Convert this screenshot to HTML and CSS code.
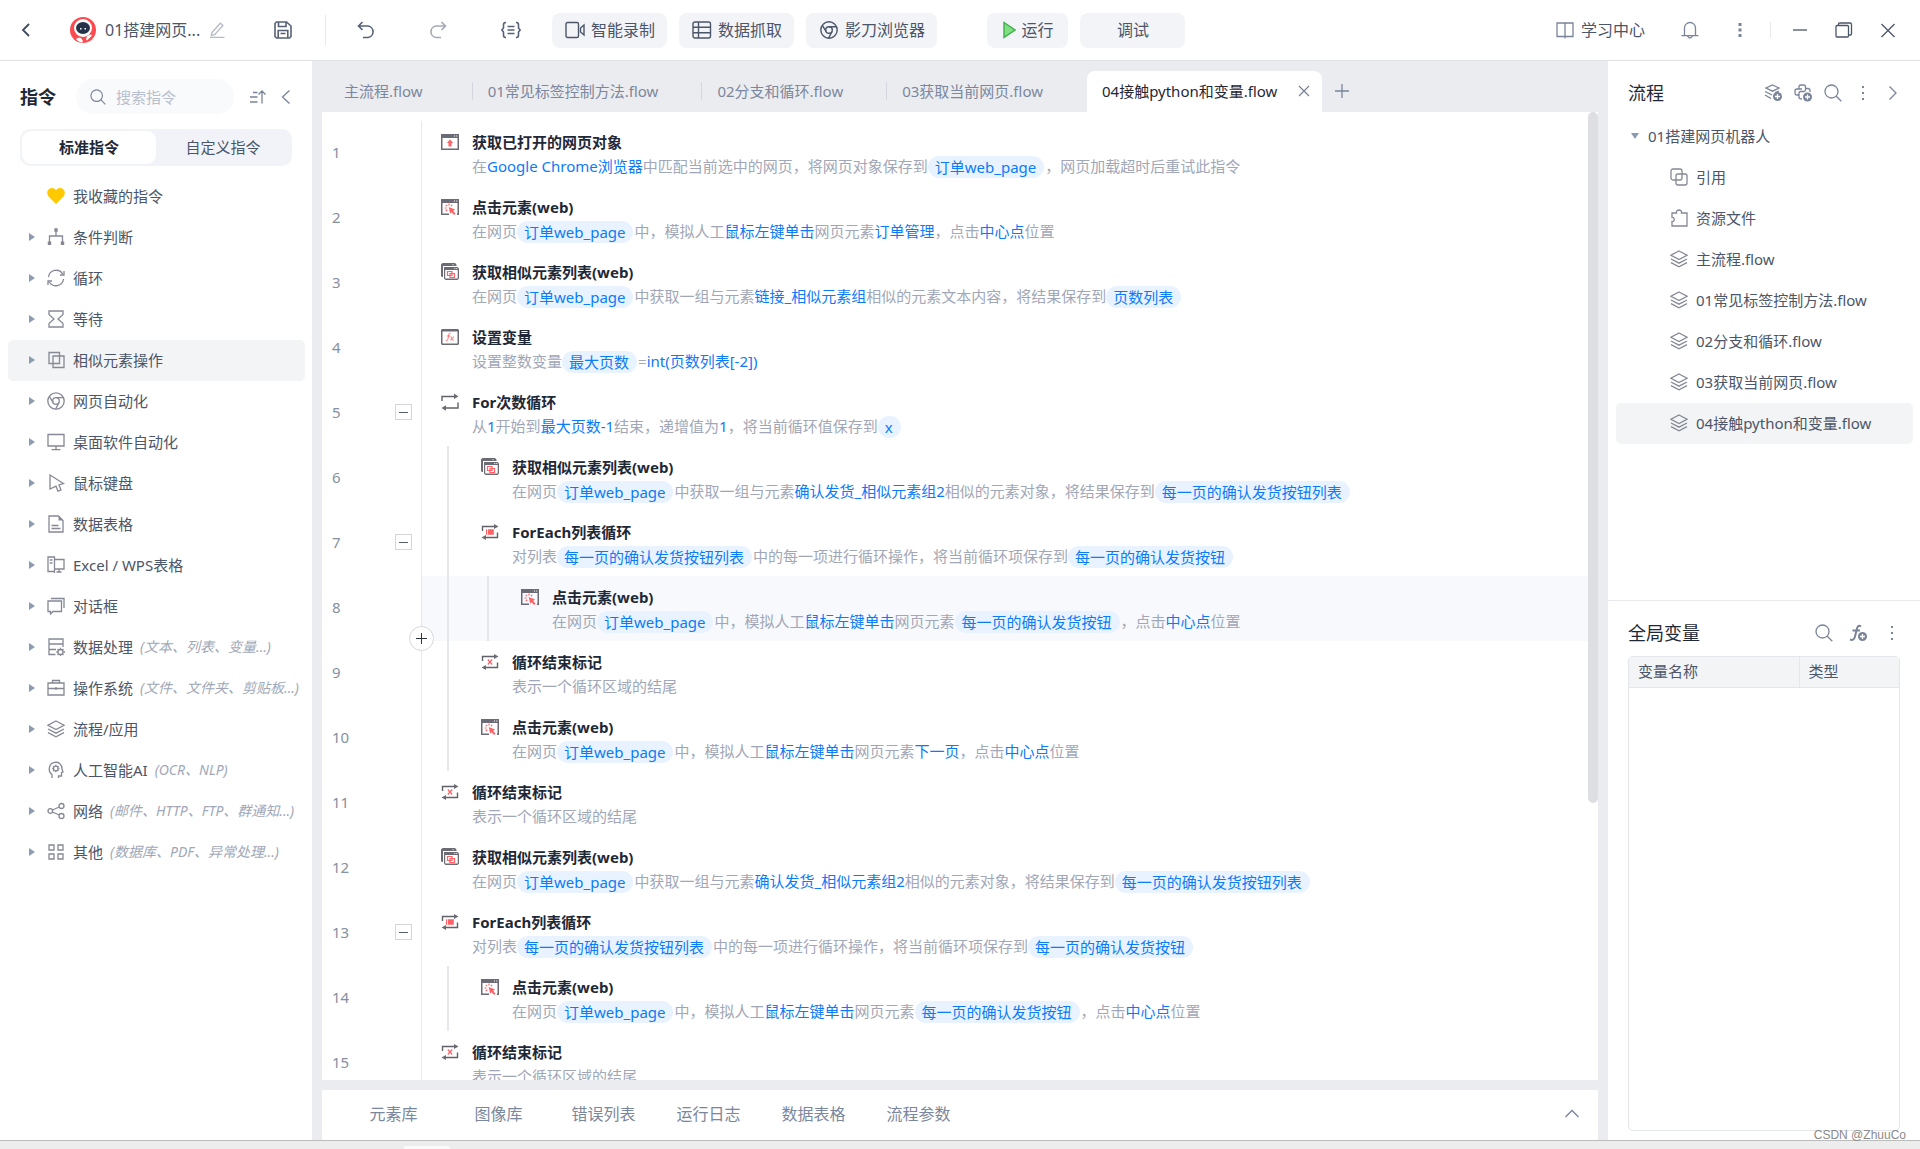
FILE: index.html
```html
<!DOCTYPE html>
<html lang="zh-CN">
<head>
<meta charset="utf-8">
<meta name="viewport" content="width=device-width, initial-scale=1">
<title>01搭建网页机器人</title>
<link rel="stylesheet" href="styles.css">
</head>
<body>
<svg class="sprite" aria-hidden="true">
  <symbol id="layers" viewBox="0 0 18 18"><path d="M9 1 17 5.300 9 9.600 1 5.300ZM1 9l8 4.200L17 9M1 12.600l8 4.200 8-4.200"/></symbol>
  <symbol id="search" viewBox="0 0 18 18"><circle cx="7.500" cy="7.500" r="6.500"/><path d="m12.300 12.300 5 5"/></symbol>
  <symbol id="dots" viewBox="0 0 18 18"><path class="fill" d="M8 2h2v2H8zM8 8h2v2H8zM8 14h2v2H8z"/></symbol>
  <symbol id="left" viewBox="0 0 18 18"><path d="m12.500 2.500-7 6.500 7 6.500"/></symbol>
  <symbol id="right" viewBox="0 0 18 18"><path d="m5.500 2.500 6.500 6.500-6.500 6.500"/></symbol>
  <symbol id="chrome" viewBox="0 0 18 18"><circle cx="9" cy="9" r="8.200"/><circle cx="9" cy="9" r="3.300"/><path d="M9 5.700h7.500M6.200 10.700 2.300 4.400M11.900 10.600 8.600 17.200"/></symbol>
  <symbol id="overlap" viewBox="0 0 18 18"><path d="M2 1.500h10.500v11H2zM6 5h11v11.500H6z"/></symbol>
  <symbol id="win-up" viewBox="0 0 18 18"><path class="dark" d="M0 1h18v16H0zM1.500 5v10.500h15V5z" fill-rule="evenodd"/><path class="white" d="M13 2.500h1v1h-1zM15.200 2.500h1v1h-1z"/><path class="red" d="m9 6.500 3.200 3.500h-1.700v3.500h-3V10H5.800z"/></symbol>
  <symbol id="win-click" viewBox="0 0 18 18"><path class="dark" d="M0 1h18v16h-2v-1.500h.500V5h-15v10.500H8V17H0z"/><path class="white" d="M13 2.500h1v1h-1zM15.200 2.500h1v1h-1z"/><path class="red-line" d="M8 5.600v2M4.800 6.800l1.400 1.400M3.600 10h2M4.800 13l1.400-1.300M11.200 6.800 9.900 8.100"/><path class="red" d="m7.700 9 6.500 2.600-2 1.200 2.300 3-1.500 1.200-2.400-3-1.400 1.800z"/></symbol>
  <symbol id="win-similar" viewBox="0 0 18 18"><path class="dark" d="M0 1.500 1.500 0H14l1.500 1.500V3H2v11H1L0 13z"/><path class="dark" d="M2.500 4h14L18 5.500v10L16.500 17h-12L3 15.500V4zM4.200 7v8.500h12.500V7z" fill-rule="evenodd"/><path class="white" d="M11.500 1.200h1v1h-1zM13.300 4.900h1v1h-1zM15.300 4.900h1v1h-1z"/><path class="red-line" d="M6.500 8.500h4.500v4H6.500zM9 10.500h4.500v4H9z"/></symbol>
  <symbol id="win-fx" viewBox="0 0 18 18"><path class="dark" d="M1 1h16l1 1v14l-1 1H1l-1-1V2zM1.500 3.500v12h15v-12z" fill-rule="evenodd"/><path class="red-line thin" d="M9.600 5.400C8 5 7.800 6 7.500 8S7 13 5 12.800M5.800 8h3.500M9.500 9c1.200-.5 1 0 1.500 1.700s.8 1.800 1.900 1.200M13 9c-1.500-.4-2 3.400-3.800 3"/></symbol>
  <symbol id="loop" viewBox="0 0 18 18"><path class="dark-line" d="M1 8V3.500h14M17 9.500v5.500H3"/><path class="dark" d="m13 .5 4.500 3L13 6zM5 12.300l-4.500 2.800 4.500 2.600z"/></symbol>
  <symbol id="loop-list" viewBox="0 0 18 18"><path class="dark-line" d="M1.500 8V3.500h13M16.500 9.500v5h-13"/><path class="dark" d="m13 1 4.500 2.500L13 6zM5 12l-4.500 2.500L5 17z"/><path class="red" d="M5 6.200h1v5.600H5zM6.800 6.200h6v5.600h-6z"/></symbol>
  <symbol id="loop-end" viewBox="0 0 18 18"><path class="dark-line" d="M1.500 8V3.500h13M16.500 9.500v5h-13"/><path class="dark" d="m13 1 4.500 2.500L13 6zM5 12l-4.500 2.500L5 17z"/><path class="red-line" d="m6.800 6.500 4.400 5M11.200 6.500l-4.400 5"/></symbol>
</svg>

<header class="topbar">
  <div class="project">
    <button class="icon-btn back" aria-label="返回"><svg viewBox="0 0 18 18"><path d="m12 3-6 6 6 6"/></svg></button>
    <svg class="logo" viewBox="0 0 26 26"><circle class="logo-bg" cx="13" cy="13" r="13"/><circle class="white" cx="13" cy="11" r="9"/><ellipse class="logo-face" cx="13" cy="11" rx="7" ry="6"/><path class="white" d="M10 11h1.500v1.500H10zM14.500 11H16v1.500h-1.500zM17 19l4-1.500 1 1-5 5-1-1z"/><path class="white" d="M6 22c3-2 6-2 7 3l-1 .5c-2-.2-4-1-6-3.500z"/></svg>
    <span class="project-name">01搭建网页...</span>
    <button class="icon-btn rename" aria-label="重命名"><svg viewBox="0 0 18 18"><path d="m4 11.500 8.300-9.300 2.600 2.300-8.300 9.200-3.300.7zM2 16.300h14.500"/></svg></button>
  </div>
  <div class="history">
    <button class="icon-btn" aria-label="保存"><svg viewBox="0 0 18 18"><path d="M3 1h9.500L17 5v10.500L15.500 17h-13L1 15.500V2.500L2.500 1zM4.500 1v4.500h7.500V1M4.200 17V9.500h9.600V17M6.500 12.500h5"/></svg></button>
    <span class="rule"></span>
    <button class="icon-btn" aria-label="撤销"><svg viewBox="0 0 18 18"><path d="M5.500 1 1.500 5l4 4M1.500 5H11a5.800 5.800 0 0 1 0 11.500H6"/></svg></button>
    <button class="icon-btn faded" aria-label="重做"><svg viewBox="0 0 18 18"><path d="m12.500 1 4 4-4 4M16.500 5H7a5.800 5.800 0 0 0 0 11.500h5"/></svg></button>
    <button class="icon-btn" aria-label="代码"><svg viewBox="0 0 20 18"><path d="M5 1.500H4.500Q2.500 1.500 2.500 4v3L.8 9l1.700 2v3q0 2.500 2 2.500H5M15 1.500h.5q2 0 2 2.500v3l1.700 2-1.700 2v3q0 2.500-2 2.500H15M6.500 5.500h7M6.500 9h7M6.500 12.500h7"/></svg></button>
  </div>
  <div class="tools">
    <button class="tool"><svg viewBox="0 0 20 18"><rect x="1" y="1.500" width="12.500" height="15" rx="1.500"/><path d="m15.500 7 3.500-3v10l-3.500-3z"/></svg>智能录制</button>
    <button class="tool"><svg viewBox="0 0 20 18"><rect x="1" y="1" width="17.500" height="16" rx="2"/><path d="M6.500 1v16M1 6.300h17.500M1 11.700h17.500"/></svg>数据抓取</button>
    <button class="tool"><svg viewBox="0 0 18 18"><use href="#chrome"/></svg>影刀浏览器</button>
  </div>
  <div class="tools run">
    <button class="tool run-btn"><svg class="play" viewBox="0 0 13 18"><path d="M1 1.500 12 9 1 16.500z"/></svg>运行</button>
    <button class="tool debug">调试</button>
  </div>
  <div class="account">
    <a class="learn" href="#learn"><svg viewBox="0 0 18 18"><path d="M1 2h16v13.500H1zM9 2v15.500"/></svg>学习中心</a>
    <button class="icon-btn" aria-label="通知"><svg viewBox="0 0 18 18"><path d="M3.500 14.500V7a5.500 5.500 0 0 1 11 0v7.500M.5 14.700h17M6.500 15q2.500 4 5 0"/></svg></button>
    <button class="icon-btn" aria-label="更多"><svg viewBox="0 0 18 18"><path class="fill" d="M7.500 2h3v3h-3zM7.500 7.500h3v3h-3zM7.500 13h3v3h-3z"/></svg></button>
    <span class="rule short"></span>
    <span class="window-btns">
      <button class="icon-btn" aria-label="最小化"><svg viewBox="0 0 18 18"><path d="M2 9h14"/></svg></button>
      <button class="icon-btn" aria-label="还原"><svg viewBox="0 0 18 18"><path d="M1 5.500Q1 4.500 2 4.500h10.500q1 0 1 1V15q0 1-1 1H2q-1 0-1-1zM3.500 4.500V3q0-1 1-1H15q1.500 0 1.500 1.500V13q0 1-1 1h-2"/></svg></button>
      <button class="icon-btn" aria-label="关闭"><svg viewBox="0 0 18 18"><path d="m2.500 3 13 13M15.500 3l-13 13"/></svg></button>
    </span>
  </div>
</header>

<div class="workspace">
  <aside class="commands">
    <div class="commands-head">
      <h2>指令</h2>
      <label class="search-box"><svg viewBox="0 0 18 18"><use href="#search"/></svg><input type="text" placeholder="搜索指令" aria-label="搜索指令"></label>
      <button class="icon-btn" aria-label="排序"><svg viewBox="0 0 18 18"><path d="M4 4.500h4.500M1 9h7.500M1 14h7.500M13 15.500V3M9.500 6.500 13 3l3.500 3.500"/></svg></button>
      <button class="icon-btn" aria-label="收起"><svg viewBox="0 0 18 18"><use href="#left"/></svg></button>
    </div>
    <div class="segment">
      <button class="active">标准指令</button>
      <button>自定义指令</button>
    </div>
    <ul class="tree">
      <li><button><i></i><svg viewBox="0 0 18 18"><path class="heart" d="M9 17 1.500 9.500C-1.500 5.500 1 1 5 1q2.500 0 4 2 1.500-2 4-2c4 0 6.500 4.500 3.500 8.500z"/></svg>我收藏的指令</button></li>
      <li><button><i class="caret"></i><svg viewBox="0 0 18 18"><path d="M9 2v6M2.500 15V8h13v7"/><path class="fill" d="M7.300.3h3.400v3.400H7.300zM.8 13.500h3.400v3.400H.8zM13.800 13.500h3.400v3.400h-3.400z"/></svg>条件判断</button></li>
      <li><button><i class="caret"></i><svg viewBox="0 0 18 18"><path d="M1.500 8A7.700 7.700 0 0 1 15.700 5M17 2v4h-4M16.500 10A7.700 7.700 0 0 1 2.300 13M1 16v-4h4"/></svg>循环</button></li>
      <li><button><i class="caret"></i><svg viewBox="0 0 18 18"><path d="M2 1h14v3.500L11 9l5 4.500V17H2v-3.500L7 9 2 4.500z"/></svg>等待</button></li>
      <li><button class="active"><i class="caret"></i><svg viewBox="0 0 18 18"><use href="#overlap"/></svg>相似元素操作</button></li>
      <li><button><i class="caret"></i><svg viewBox="0 0 18 18"><use href="#chrome"/></svg>网页自动化</button></li>
      <li><button><i class="caret"></i><svg viewBox="0 0 18 18"><path d="M1 1.500h16v11.500H1zM9 13v3.500M4.500 16.700h9"/></svg>桌面软件自动化</button></li>
      <li><button><i class="caret"></i><svg viewBox="0 0 18 18"><path d="m3 1 13.500 8.500-4.500 1.500 2 5-3 1.200-2-5L3 15z"/></svg>鼠标键盘</button></li>
      <li><button><i class="caret"></i><svg viewBox="0 0 18 18"><path d="M2 1h9.500L16 5.500V17H2zM4.500 10.500h7M4.500 13.500h9"/><path class="fill" d="M11.500 1 16 5.500h-4.500z"/></svg>数据表格</button></li>
      <li><button><i class="caret"></i><svg viewBox="0 0 18 18"><path d="M7.500 15.500H1V1h6.500V17M2.800 4h2.700M2.800 7h2.700M7.500 3.500H17v9.500H7.500M12 13v3M9.500 16h5"/></svg>Excel / WPS表格</button></li>
      <li><button><i class="caret"></i><svg viewBox="0 0 18 18"><path d="M1 4h13.500v10.500H6L3.500 17v-2.500H1zM4 1.500h13V11"/></svg>对话框</button></li>
      <li><button><i class="caret"></i><svg viewBox="0 0 18 18"><path d="M8.500 16.500H2V1h14v8M2 6h14M2 11.500h7M4.500 6h2M4.500 11.500h2"/><circle cx="13.500" cy="14" r="2.500"/><path d="M13.500 9.700v1.500M13.500 16.700v1.300M9.300 14h1.500M16.300 14H18M10.500 11l1 1M15.500 16l1 1M16.500 11l-1 1M11.500 16l-1 1"/></svg>数据处理<em>(文本、列表、变量...)</em></button></li>
      <li><button><i class="caret"></i><svg viewBox="0 0 18 18"><path d="M1 4h16v12H1zM5.500 4V1.500h7V4M1 9.500h16M9 8v3"/></svg>操作系统<em>(文件、文件夹、剪贴板...)</em></button></li>
      <li><button><i class="caret"></i><svg viewBox="0 0 18 18"><use href="#layers"/></svg>流程/应用</button></li>
      <li><button><i class="caret"></i><svg viewBox="0 0 18 18"><path d="M5 17v-3.500C.8 10.500 1.500 3.500 6.500 1.700c5-1.700 8.500 1.800 8.500 6.300l1 3-1.500.5V15h-3v2"/><circle cx="8.800" cy="7.500" r="2.300"/><path d="M8.800 3.700V5M8.800 10v1.300M5.200 7.500h1.300M11.100 7.500h1.300M6.200 4.900l.9.900M10.500 9.200l.9.900M11.400 4.900l-.9.900M7.100 9.200l-.9.900"/></svg>人工智能AI<em>(OCR、NLP)</em></button></li>
      <li><button><i class="caret"></i><svg viewBox="0 0 18 18"><circle cx="3.300" cy="9" r="2.300"/><circle cx="14.500" cy="4" r="2.500"/><circle cx="14.500" cy="14" r="2.500"/><path d="m5.500 8 6.700-3M5.500 10l6.700 3"/></svg>网络<em>(邮件、HTTP、FTP、群通知...)</em></button></li>
      <li><button><i class="caret"></i><svg viewBox="0 0 18 18"><path d="M2 2h5v5H2zM11 2h5v5h-5zM2 11h5v5H2zM11 11h5v5h-5z"/></svg>其他<em>(数据库、PDF、异常处理...)</em></button></li>
    </ul>
  </aside>

  <main class="center">
    <nav class="tabs">
      <a class="tab" href="#main">主流程.flow</a>
      <a class="tab" href="#f1">01常见标签控制方法.flow</a>
      <a class="tab" href="#f2">02分支和循环.flow</a>
      <a class="tab" href="#f3">03获取当前网页.flow</a>
      <div class="tab active"><a href="#f4">04接触python和变量.flow</a><button class="icon-btn" aria-label="关闭标签"><svg viewBox="0 0 18 18"><path d="m4 4 10 10M14 4 4 14"/></svg></button></div>
      <button class="icon-btn add-tab" aria-label="新建标签"><svg viewBox="0 0 18 18"><path d="M9 2v14M2 9h14"/></svg></button>
    </nav>
    <div class="editor">
      <ol class="steps">
        <li><div class="gutter">1</div><div class="step"><svg viewBox="0 0 18 18"><use href="#win-up"/></svg><div><h3>获取已打开的网页对象</h3><p>在<a href="#e">Google Chrome浏览器</a>中匹配当前选中的网页，将网页对象保存到<b>订单web_page</b>，网页加载超时后重试此指令</p></div></div></li>
        <li><div class="gutter">2</div><div class="step"><svg viewBox="0 0 18 18"><use href="#win-click"/></svg><div><h3>点击元素(web)</h3><p>在网页<b>订单web_page</b>中，模拟人工<a href="#e">鼠标左键单击</a>网页元素<a href="#e">订单管理</a>，点击<a href="#e">中心点</a>位置</p></div></div></li>
        <li><div class="gutter">3</div><div class="step"><svg viewBox="0 0 18 18"><use href="#win-similar"/></svg><div><h3>获取相似元素列表(web)</h3><p>在网页<b>订单web_page</b>中获取一组与元素<a href="#e">链接_相似元素组</a>相似的元素文本内容，将结果保存到<b>页数列表</b></p></div></div></li>
        <li><div class="gutter">4</div><div class="step"><svg viewBox="0 0 18 18"><use href="#win-fx"/></svg><div><h3>设置变量</h3><p>设置整数变量<b>最大页数</b>=<a href="#e">int(页数列表[-2])</a></p></div></div></li>
        <li><div class="gutter">5<button class="fold" aria-label="折叠"></button></div><div class="step"><svg viewBox="0 0 18 18"><use href="#loop"/></svg><div><h3>For次数循环</h3><p>从<a href="#e">1</a>开始到<a href="#e">最大页数-1</a>结束，递增值为<a href="#e">1</a>，将当前循环值保存到<b>x</b></p></div></div></li>
        <li><div class="gutter">6</div><div class="step"><i class="guide"></i><svg viewBox="0 0 18 18"><use href="#win-similar"/></svg><div><h3>获取相似元素列表(web)</h3><p>在网页<b>订单web_page</b>中获取一组与元素<a href="#e">确认发货_相似元素组2</a>相似的元素对象，将结果保存到<b>每一页的确认发货按钮列表</b></p></div></div></li>
        <li><div class="gutter">7<button class="fold" aria-label="折叠"></button></div><div class="step"><i class="guide"></i><svg viewBox="0 0 18 18"><use href="#loop-list"/></svg><div><h3>ForEach列表循环</h3><p>对列表<b>每一页的确认发货按钮列表</b>中的每一项进行循环操作，将当前循环项保存到<b>每一页的确认发货按钮</b></p></div></div></li>
        <li class="selected"><div class="gutter">8</div><div class="step"><i class="guide"></i><i class="guide"></i><svg viewBox="0 0 18 18"><use href="#win-click"/></svg><div><h3>点击元素(web)</h3><p>在网页<b>订单web_page</b>中，模拟人工<a href="#e">鼠标左键单击</a>网页元素<b>每一页的确认发货按钮</b>，点击<a href="#e">中心点</a>位置</p></div></div><button class="insert" aria-label="插入指令"></button></li>
        <li><div class="gutter">9</div><div class="step"><i class="guide"></i><svg viewBox="0 0 18 18"><use href="#loop-end"/></svg><div><h3>循环结束标记</h3><p>表示一个循环区域的结尾</p></div></div></li>
        <li><div class="gutter">10</div><div class="step"><i class="guide"></i><svg viewBox="0 0 18 18"><use href="#win-click"/></svg><div><h3>点击元素(web)</h3><p>在网页<b>订单web_page</b>中，模拟人工<a href="#e">鼠标左键单击</a>网页元素<a href="#e">下一页</a>，点击<a href="#e">中心点</a>位置</p></div></div></li>
        <li><div class="gutter">11</div><div class="step"><svg viewBox="0 0 18 18"><use href="#loop-end"/></svg><div><h3>循环结束标记</h3><p>表示一个循环区域的结尾</p></div></div></li>
        <li><div class="gutter">12</div><div class="step"><svg viewBox="0 0 18 18"><use href="#win-similar"/></svg><div><h3>获取相似元素列表(web)</h3><p>在网页<b>订单web_page</b>中获取一组与元素<a href="#e">确认发货_相似元素组2</a>相似的元素对象，将结果保存到<b>每一页的确认发货按钮列表</b></p></div></div></li>
        <li><div class="gutter">13<button class="fold" aria-label="折叠"></button></div><div class="step"><svg viewBox="0 0 18 18"><use href="#loop-list"/></svg><div><h3>ForEach列表循环</h3><p>对列表<b>每一页的确认发货按钮列表</b>中的每一项进行循环操作，将当前循环项保存到<b>每一页的确认发货按钮</b></p></div></div></li>
        <li><div class="gutter">14</div><div class="step"><i class="guide"></i><svg viewBox="0 0 18 18"><use href="#win-click"/></svg><div><h3>点击元素(web)</h3><p>在网页<b>订单web_page</b>中，模拟人工<a href="#e">鼠标左键单击</a>网页元素<b>每一页的确认发货按钮</b>，点击<a href="#e">中心点</a>位置</p></div></div></li>
        <li><div class="gutter">15</div><div class="step"><svg viewBox="0 0 18 18"><use href="#loop-end"/></svg><div><h3>循环结束标记</h3><p>表示一个循环区域的结尾</p></div></div></li>
      </ol>
      <div class="scrollbar"><div class="thumb"></div></div>
    </div>
    <div class="dock">
      <button>元素库</button><button>图像库</button><button>错误列表</button><button>运行日志</button><button>数据表格</button><button>流程参数</button>
      <button class="icon-btn expand" aria-label="展开"><svg viewBox="0 0 18 18"><path d="m2.500 12 6.500-6.500 6.500 6.500"/></svg></button>
    </div>
  </main>

  <aside class="side">
    <section class="flows">
      <div class="side-head">
        <h2>流程</h2>
        <button class="icon-btn" aria-label="新建流程"><svg viewBox="0 0 18 18"><path d="M8.500 1 15 4 8.500 7.200 2 4zM1 7.500l7 3.500M1 11l6 3.500M11 8.500l4-1.500"/><circle class="fill" cx="13.500" cy="12.500" r="4.500"/><path class="white-line" d="M13.500 10v5M11 12.500h5"/></svg></button>
        <button class="icon-btn" aria-label="新建Python模块"><svg viewBox="0 0 18 18"><path d="M5 5V2.500Q5 1 7 1h2.500q2 0 2 2v3q0 1.500-1.500 1.500H6.500Q5 7.500 5 9v2H3Q1 11 1 9V7q0-2 2-2h5M11.500 4.500H14q2 0 2 2V8M5 11v2.500Q5 15 8 15"/><circle class="fill" cx="13.500" cy="13" r="4.500"/><path class="white-line" d="M13.500 10.500v5M11 13h5"/></svg></button>
        <button class="icon-btn" aria-label="搜索流程"><svg viewBox="0 0 18 18"><use href="#search"/></svg></button>
        <button class="icon-btn" aria-label="更多"><svg viewBox="0 0 18 18"><use href="#dots"/></svg></button>
        <button class="icon-btn" aria-label="收起"><svg viewBox="0 0 18 18"><use href="#right"/></svg></button>
      </div>
      <ul class="tree files">
        <li><button class="root"><i class="caret open"></i>01搭建网页机器人</button></li>
        <li><button><svg viewBox="0 0 18 18"><rect x="1" y="1" width="11" height="11" rx="2"/><rect x="6" y="6" width="11" height="11" rx="2"/></svg>引用</button></li>
        <li><button><svg viewBox="0 0 18 18"><path d="M2 4h4.500C6 2 7.500 1 9 1s3 1 2.500 3H17v13H2v-4.500c3 .5 3-4.500 0-4z"/></svg>资源文件</button></li>
        <li><button><svg viewBox="0 0 18 18"><use href="#layers"/></svg>主流程.flow</button></li>
        <li><button><svg viewBox="0 0 18 18"><use href="#layers"/></svg>01常见标签控制方法.flow</button></li>
        <li><button><svg viewBox="0 0 18 18"><use href="#layers"/></svg>02分支和循环.flow</button></li>
        <li><button><svg viewBox="0 0 18 18"><use href="#layers"/></svg>03获取当前网页.flow</button></li>
        <li><button class="active"><svg viewBox="0 0 18 18"><use href="#layers"/></svg>04接触python和变量.flow</button></li>
      </ul>
    </section>
    <section class="variables">
      <div class="side-head">
        <h2>全局变量</h2>
        <button class="icon-btn" aria-label="搜索变量"><svg viewBox="0 0 18 18"><use href="#search"/></svg></button>
        <button class="icon-btn" aria-label="新建变量"><svg viewBox="0 0 18 18"><path class="bold-line" d="M12 2.500Q9 .5 8 4.500L6 12.500Q5 17 1 15.500M3.500 6.500H11"/><circle class="fill" cx="13.500" cy="12.500" r="4.500"/><path class="white-line" d="M13.500 10v5M11 12.500h5"/></svg></button>
        <button class="icon-btn" aria-label="更多"><svg viewBox="0 0 18 18"><use href="#dots"/></svg></button>
      </div>
      <div class="var-table">
        <table>
          <thead><tr><th scope="col" class="name">变量名称</th><th scope="col">类型</th></tr></thead>
        </table>
      </div>
    </section>
    <span class="watermark">CSDN @ZhuuCo</span>
  </aside>
</div>
<footer class="taskbar"><span></span></footer>
</body>
</html>
```

FILE: styles.css
```css
* { box-sizing: border-box; }

body {
  margin: 0;
  height: 100vh;
  display: flex;
  flex-direction: column;
  overflow: hidden;
  background: #fff;
  color: #4b5668;
  font: 15px/22px "Noto Sans", "Noto Sans CJK SC", sans-serif;
}

h2, h3, p, ul, ol { margin: 0; padding: 0; }
ul, ol { list-style: none; }
a { color: inherit; text-decoration: none; }

button {
  padding: 0;
  border: 0;
  background: none;
  color: inherit;
  font: inherit;
  white-space: nowrap;
}

svg {
  flex: none;
  width: 18px;
  height: 18px;
  fill: none;
  stroke: currentColor;
  stroke-width: 1.3;
}

.sprite { position: absolute; width: 0; height: 0; }
.fill { fill: currentColor; stroke: none; }
.dark { fill: #6b6b76; stroke: none; }
.red { fill: #ff6166; stroke: none; }
.white { fill: #fff; stroke: none; }
.dark-line { stroke: #62626a; stroke-width: 1.4; }
.red-line { stroke: #ff6166; stroke-width: 1.2; }
.red-line.thin { stroke-width: 0.9; }
.white-line { stroke: #fff; }
.bold-line { stroke-width: 2; }
.heart { fill: #ffc900; stroke: none; }
.logo-bg { fill: #fb4b50; stroke: none; }
.logo-face { fill: #26324a; stroke: none; }

.icon-btn {
  display: flex;
  flex: none;
  color: #7a8499;
}

/* Top bar */
.topbar {
  display: flex;
  flex: none;
  align-items: center;
  height: 61px;
  border-bottom: 1px solid #e0e1e6;
  font-size: 16px;
}

.project {
  display: flex;
  flex: none;
  align-items: center;
  width: 274px;
  padding-left: 17px;
}

.back { color: #3f4a5c; }
.back svg { stroke-width: 1.8; }
.logo { width: 26px; height: 26px; margin: 0 9px 0 35px; }
.rename { margin-left: 8px; color: #b4bac6; }

.history {
  display: flex;
  flex: none;
  align-items: center;
  width: 278px;
}

.history .icon-btn { margin-right: 54px; color: #566175; }
.history svg { stroke-width: 1.6; }
.history .icon-btn:first-child { margin-right: 33px; }
.history .faded { color: #a3a9b5; }
.history .icon-btn:last-child { margin: 0; }
.history .icon-btn:last-child svg { width: 20px; }

.rule { width: 1px; height: 30px; margin-right: 31px; background: #e6e8ed; }

.tools { display: flex; flex: none; gap: 12px; }
.tools.run { margin-left: 50px; }

.tool {
  display: flex;
  align-items: center;
  justify-content: center;
  gap: 6px;
  height: 35px;
  padding: 0 12px 0 13px;
  border-radius: 8px;
  background: #f3f4f8;
}

.tool svg { width: 20px; stroke-width: 1.4; }
.tool .play { width: 13px; fill: #7ee081; stroke: #3eae49; }
.tool.run-btn { width: 81px; }
.tool.debug { width: 105px; }

.account {
  display: flex;
  align-items: center;
  gap: 32px;
  margin-left: auto;
  padding-right: 23px;
}

.account svg { stroke-width: 1.3; }
.learn { display: flex; align-items: center; gap: 7px; margin-right: 4px; }
.learn svg { color: #7a8499; }
.account .rule.short { height: 16px; margin: 0 -12px 0 -11px; }
.window-btns { display: flex; gap: 26px; }
.window-btns .icon-btn { color: #4b5668; }

/* Columns */
.workspace {
  display: flex;
  flex: 1;
  min-height: 0;
  background: #ebecf0;
}

.commands { flex: none; width: 312px; background: #fff; }

.commands-head {
  display: flex;
  align-items: center;
  height: 68px;
  padding: 3px 17px 0 20px;
}

h2 { color: #1f2836; font-size: 18px; font-weight: 400; line-height: 26px; }
.commands-head h2 { width: 56px; font-weight: 700; }
.commands-head > .icon-btn { margin-left: 10px; }

.search-box {
  display: flex;
  align-items: center;
  gap: 10px;
  width: 158px;
  height: 35px;
  margin-right: 5px;
  padding: 0 14px;
  border-radius: 18px;
  background: #f9fafc;
  color: #7a8499;
}

.search-box svg { width: 16px; height: 16px; }

.search-box input {
  width: 100%;
  min-width: 0;
  padding: 0;
  border: 0;
  background: none;
  color: inherit;
  font: inherit;
}

.search-box input::placeholder { color: #b8bfce; opacity: 1; }

.segment {
  display: flex;
  height: 37px;
  margin: 0 20px 10px;
  padding: 2px;
  border-radius: 10px;
  background: #f2f3f8;
}

.segment button { flex: 1; padding-bottom: 2px; border-radius: 9px; }
.segment .active { background: #fff; color: #1f2836; font-weight: 700; }

.tree { padding: 0 7px 0 8px; }

.tree button {
  display: flex;
  align-items: center;
  width: 100%;
  height: 41px;
  padding: 0 0 2px 20px;
  border-radius: 5px;
}

.tree button.active { background: #f3f4f6; }
.tree svg { margin-right: 8px; color: #868995; }
.tree em { margin-left: 7px; color: #a0a8b8; font-size: 14px; }
.tree i { width: 19px; }

.caret::before {
  content: "";
  display: block;
  width: 0;
  margin-left: 1px;
  border: 4px solid transparent;
  border-right: 0;
  border-left: 6px solid #8c9bb0;
}

.caret.open::before {
  border: 4px solid transparent;
  border-bottom: 0;
  border-top: 6px solid #8c9bb0;
}

/* Editor column */
.center {
  display: flex;
  flex: 1;
  flex-direction: column;
  min-width: 0;
  padding: 10px 10px 0;
}

.tabs { display: flex; flex: none; height: 41px; color: #7b879c; }

.tab {
  position: relative;
  display: flex;
  align-items: center;
  padding: 0 44px 2px 15px;
  white-space: nowrap;
}

.tab:first-child { padding: 0 50px 2px 22px; }

.tab:nth-child(-n+3)::after {
  content: "";
  position: absolute;
  right: 0;
  width: 1px;
  height: 18px;
  background: #d5d7de;
}

.tab.active {
  gap: 18px;
  padding: 0 9px 2px 15px;
  border-radius: 8px 8px 0 0;
  background: #fff;
  color: #1f2836;
}

.add-tab { align-items: center; margin-left: 11px; padding-bottom: 2px; }

.editor {
  display: flex;
  flex: 1;
  min-height: 0;
  overflow: hidden;
  background: #fff;
}

.steps { flex: 1; min-width: 0; padding-top: 9px; }
.steps li { position: relative; display: flex; height: 65px; }

.gutter {
  display: flex;
  flex: none;
  align-items: center;
  justify-content: space-between;
  width: 99px;
  padding: 0 9px 3px 10px;
  color: #8590a2;
}

.fold {
  display: grid;
  place-items: center;
  width: 17px;
  height: 16px;
  border: 1px solid #d4d6dc;
}

.fold::before { content: ""; width: 9px; height: 1px; background: #555e6e; }

.step {
  display: flex;
  flex: 1;
  min-width: 0;
  padding-left: 18px;
  border-left: 1px solid #e8e9ee;
}

.step > svg { margin: 12px 13px 0 1px; }
.step > div { padding-top: 10px; }

.guide {
  flex: none;
  width: 33px;
  margin-left: 7px;
  border-left: 2px solid #e6e7ec;
}

.selected .step { background: #f7f9fd; }

h3 { margin-bottom: 2px; color: #1f2836; font-size: 15px; font-weight: 700; line-height: 22px; }
.step p { color: #a1a7b7; white-space: nowrap; }
.step p a { color: #0c7bf8; }

.step p b {
  display: inline-block;
  margin-right: 1px;
  padding: 0 8px 0 7px;
  border-radius: 11px;
  background: #e9f3ff;
  color: #0c7bf8;
  font-weight: 400;
  vertical-align: -1px;
}

.insert {
  position: absolute;
  z-index: 1;
  bottom: -10px;
  left: 87px;
  display: grid;
  place-items: center;
  width: 25px;
  height: 25px;
  border: 1px solid #d6d8de;
  border-radius: 50%;
  background: #fff;
}

.insert::before, .insert::after {
  content: "";
  grid-area: 1 / 1;
  width: 11px;
  height: 1px;
  background: #2c3443;
}

.insert::after { width: 1px; height: 11px; }

.scrollbar { flex: none; width: 10px; }
.thumb { height: 71.4%; border-radius: 5px; background: #dedfe3; }

.dock {
  display: flex;
  flex: none;
  align-items: center;
  height: 50px;
  margin-top: 10px;
  padding: 0 17px 2px 19px;
  background: #fff;
  color: #7b879c;
  font-size: 16px;
}

.dock button { width: 105px; }
.dock .expand { width: 18px; margin-left: auto; }

/* Right column */
.side {
  position: relative;
  display: flex;
  flex: none;
  flex-direction: column;
  width: 312px;
  background: #fff;
}

.flows { height: 50%; border-bottom: 1px solid #e8e9ee; }

.side-head {
  display: flex;
  align-items: center;
  gap: 12px;
  height: 55px;
  padding: 10px 18px 0 20px;
}

.side-head h2 { margin-right: auto; }
.flows .side-head { padding-top: 9px; }
.files button { padding-left: 54px; }
.files .root { padding-left: 14px; }
.files .root i { width: 18px; }

.variables {
  display: flex;
  flex: 1;
  flex-direction: column;
  padding-bottom: 9px;
}

.variables .side-head { gap: 16px; padding-right: 19px; }

.var-table {
  flex: 1;
  margin: 0 20px;
  overflow: hidden;
  border: 1px solid #e4e6ec;
  border-radius: 5px;
}

table { width: 100%; border-collapse: collapse; }

th {
  height: 31px;
  padding: 0 9px 1px;
  border-bottom: 1px solid #e4e6ec;
  background: #f3f4f6;
  font-weight: 400;
  text-align: left;
}

th.name { width: 63%; border-right: 1px solid #e4e6ec; }

.watermark {
  position: absolute;
  right: 14px;
  bottom: -2px;
  color: #8a8a8a;
  font: 12px/14px "Liberation Sans", sans-serif;
}

.taskbar {
  display: flex;
  flex: none;
  align-items: flex-end;
  height: 9px;
  padding-left: 404px;
  border-top: 1px solid #bcbcbc;
  background: #ededed;
}

.taskbar span { width: 46px; height: 3px; border-radius: 2px 2px 0 0; background: #fafafa; }
```
